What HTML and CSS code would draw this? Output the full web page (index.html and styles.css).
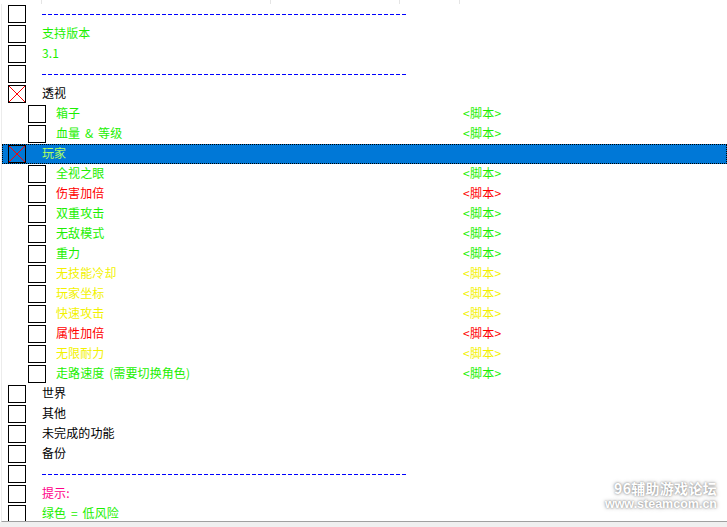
FILE: index.html
```html
<!DOCTYPE html>
<html lang="zh">
<head>
    <meta charset="UTF-8">
    <title>Cheat Table</title>
    <link rel="stylesheet" href="styles.css">
</head>
<body>
    <div class="table">
        <div class="header">
            <div class="col c1"></div>
            <div class="col c2"></div>
            <div class="col c3"></div>
            <div class="col c4"></div>
        </div>
        <div class="list">
            <div class="row"><div class="item"><span class="chk"></span><span class="dash"></span></div></div>
            <div class="row"><div class="item"><span class="chk"></span><span class="name green">支持版本</span></div></div>
            <div class="row"><div class="item"><span class="chk"></span><span class="name green">3.1</span></div></div>
            <div class="row"><div class="item"><span class="chk"></span><span class="dash"></span></div></div>
            <div class="row"><div class="item"><span class="chk on"></span><span class="name">透视</span></div></div>
            <div class="row sub"><div class="item"><span class="chk"></span><span class="name green">箱子</span></div><span class="val green">&lt;脚本&gt;</span></div>
            <div class="row sub"><div class="item"><span class="chk"></span><span class="name green">血量 &amp; 等级</span></div><span class="val green">&lt;脚本&gt;</span></div>
            <div class="row selected"><div class="item"><span class="chk on"></span><span class="name">玩家</span></div></div>
            <div class="row sub"><div class="item"><span class="chk"></span><span class="name green">全视之眼</span></div><span class="val green">&lt;脚本&gt;</span></div>
            <div class="row sub"><div class="item"><span class="chk"></span><span class="name red">伤害加倍</span></div><span class="val red">&lt;脚本&gt;</span></div>
            <div class="row sub"><div class="item"><span class="chk"></span><span class="name green">双重攻击</span></div><span class="val green">&lt;脚本&gt;</span></div>
            <div class="row sub"><div class="item"><span class="chk"></span><span class="name green">无敌模式</span></div><span class="val green">&lt;脚本&gt;</span></div>
            <div class="row sub"><div class="item"><span class="chk"></span><span class="name green">重力</span></div><span class="val green">&lt;脚本&gt;</span></div>
            <div class="row sub"><div class="item"><span class="chk"></span><span class="name yellow">无技能冷却</span></div><span class="val yellow">&lt;脚本&gt;</span></div>
            <div class="row sub"><div class="item"><span class="chk"></span><span class="name yellow">玩家坐标</span></div><span class="val yellow">&lt;脚本&gt;</span></div>
            <div class="row sub"><div class="item"><span class="chk"></span><span class="name yellow">快速攻击</span></div><span class="val yellow">&lt;脚本&gt;</span></div>
            <div class="row sub"><div class="item"><span class="chk"></span><span class="name red">属性加倍</span></div><span class="val red">&lt;脚本&gt;</span></div>
            <div class="row sub"><div class="item"><span class="chk"></span><span class="name yellow">无限耐力</span></div><span class="val yellow">&lt;脚本&gt;</span></div>
            <div class="row sub"><div class="item"><span class="chk"></span><span class="name green">走路速度 (需要切换角色)</span></div><span class="val green">&lt;脚本&gt;</span></div>
            <div class="row"><div class="item"><span class="chk"></span><span class="name">世界</span></div></div>
            <div class="row"><div class="item"><span class="chk"></span><span class="name">其他</span></div></div>
            <div class="row"><div class="item"><span class="chk"></span><span class="name">未完成的功能</span></div></div>
            <div class="row"><div class="item"><span class="chk"></span><span class="name">备份</span></div></div>
            <div class="row"><div class="item"><span class="chk"></span><span class="dash"></span></div></div>
            <div class="row"><div class="item"><span class="chk"></span><span class="name pink">提示:</span></div></div>
            <div class="row"><div class="item"><span class="chk"></span><span class="name green">绿色 = 低风险</span></div></div>
        </div>
        <div class="footer"></div>
    </div>

    <div class="watermark">
        <div class="wm-title">96辅助游戏论坛</div>
        <div class="wm-url">www.steamcom.cn</div>
    </div>
</body>
</html>
```

FILE: styles.css
```css
body {
    margin: 0;
    padding: 0;
    background-color: #fff;
    font-family: "Noto Sans CJK SC", "Liberation Sans", sans-serif;
    font-size: 12px;
    color: #000;
    overflow: hidden;
}
.table {
    height: 527px;
    display: flex;
    flex-direction: column;
}
.header {
    height: 4px;
    display: flex;
    flex-shrink: 0;
}
.col {
    border-right: 1px solid #e5e5e5;
}
.c1 { width: 41px; }
.c2 { width: 228px; }
.c3 { width: 128px; }
.c4 { width: 59px; }
.list {
    height: 517px;
    overflow: hidden;
    margin-left: 1px;
    border-left: 1px solid #ececec;
    border-bottom: 1px solid #a0a0a0;
}
.footer {
    flex: 1;
    background-color: #f0f0f0;
}
.row {
    height: 20px;
    display: grid;
    grid-template-columns: 460px 1fr;
    align-items: center;
}
.item {
    display: flex;
    align-items: center;
    height: 20px;
    padding-left: 6px;
}
.chk {
    width: 16px;
    height: 16px;
    border: 1px solid #000;
    flex-shrink: 0;
}
.chk.on {
    background:
        linear-gradient(to top right, transparent calc(50% - 0.6px), #ff0000, transparent calc(50% + 0.6px)),
        linear-gradient(to bottom right, transparent calc(50% - 0.6px), #ff0000, transparent calc(50% + 0.6px));
}
.name {
    margin-left: 16px;
    line-height: 18px;
    padding-bottom: 2px;
    white-space: nowrap;
    word-spacing: 2px;
    letter-spacing: 0.1px;
}
.sub .item {
    padding-left: 26px;
}
.sub .name {
    margin-left: 10px;
}
.val {
    padding-left: 1px;
    line-height: 18px;
    padding-bottom: 2px;
    letter-spacing: 0.3px;
}
.dash {
    margin-left: 16px;
    width: 364px;
    height: 1px;
    background: repeating-linear-gradient(to right, #0000ff 0, #0000ff 4px, transparent 4px, transparent 6px);
}
.selected {
    background-color: #0078d7;
    outline: 1px dotted #000;
    outline-offset: -1px;
}
.selected .name {
    color: #b0ff60;
}
.green { color: #1cf000; }
.yellow { color: #f2f200; }
.red { color: #ff0000; }
.pink { color: #ff0088; }

.watermark {
    position: absolute;
    right: 10px;
    top: 479px;
    color: #fff;
    font-weight: bold;
    text-shadow: 0 0 2px #888, 0 0 4px #aaa;
    text-align: right;
}
.wm-title {
    font-size: 14px;
    line-height: 18px;
    letter-spacing: 0.3px;
}
.wm-url {
    font-family: "Liberation Sans", sans-serif;
    font-size: 12.5px;
    line-height: 14px;
}
```
